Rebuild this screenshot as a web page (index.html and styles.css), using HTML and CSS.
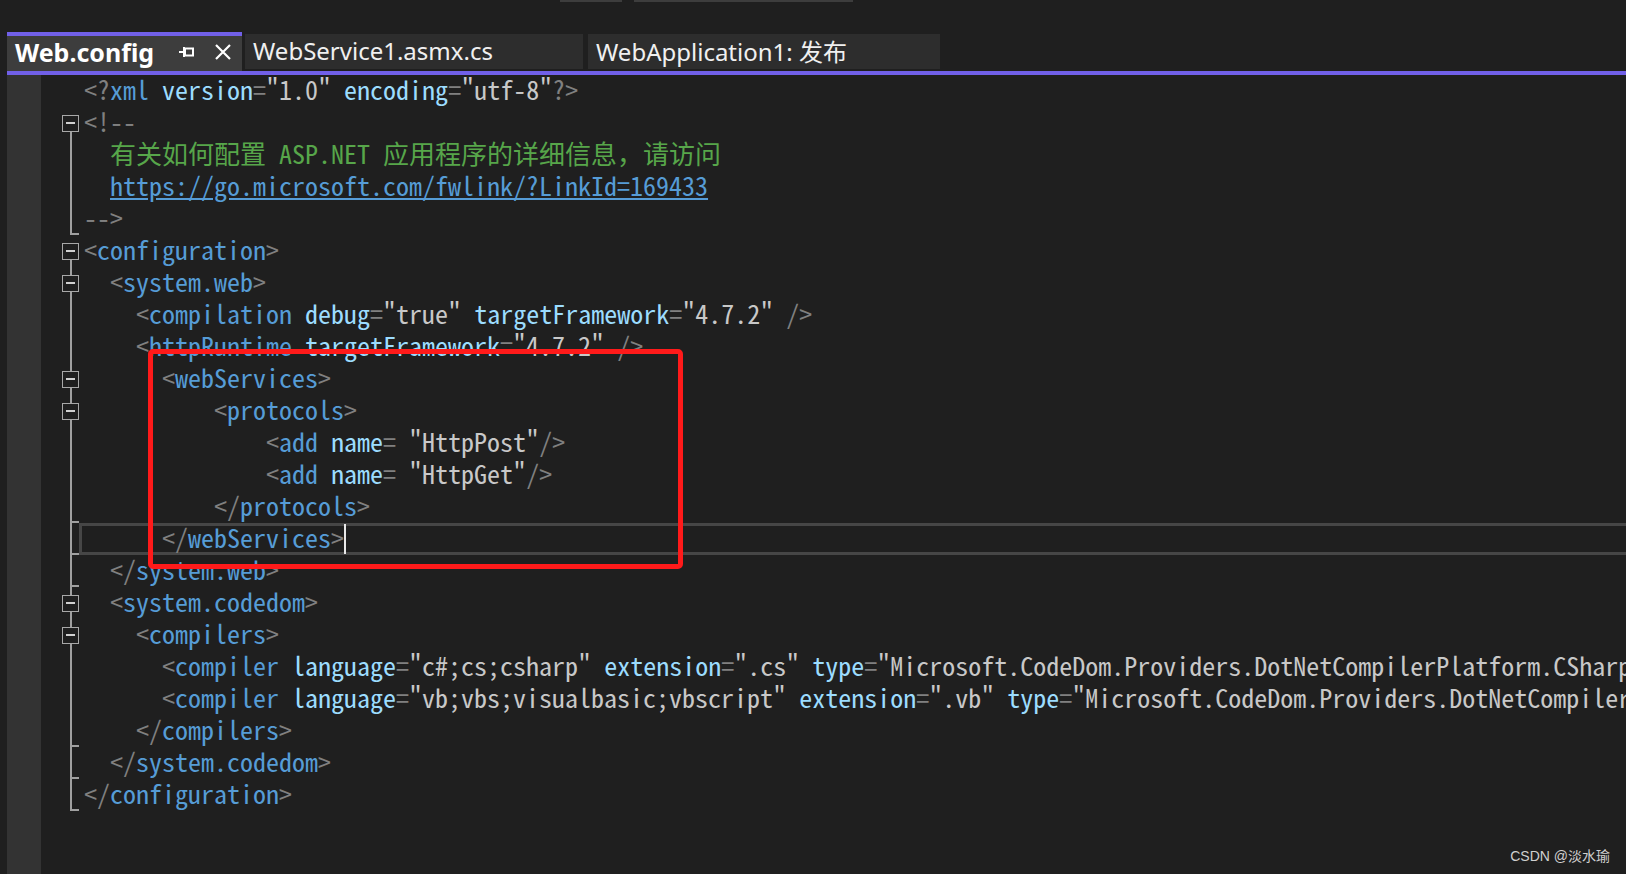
FILE: index.html
```html
<!DOCTYPE html>
<html lang="zh-CN">
<head>
    <meta charset="UTF-8">
    <title>Web.config</title>
    <link rel="stylesheet" href="styles.css">
</head>
<body>
    <!-- Toolbar remnants at the very top -->
    <div class="toolbar">
        <div class="tool-stub short"></div>
        <div class="tool-stub long"></div>
    </div>

    <!-- Document tabs -->
    <div class="tabs">
        <div class="tab active">
            <span class="tab-title">Web.config</span>
            <svg class="tab-pin" width="16" height="12" viewBox="0 0 16 12">
                <path d="M0 6H5M5 1V11" stroke="#fff" stroke-width="2" fill="none"/>
                <rect x="6" y="2.5" width="8" height="7" stroke="#fff" stroke-width="2" fill="#3d3d3d"/>
            </svg>
            <svg class="tab-close" width="18" height="18" viewBox="0 0 18 18">
                <path d="M2 2L16 16M16 2L2 16" stroke="#fff" stroke-width="2.2" fill="none"/>
            </svg>
        </div>
        <div class="tab">WebService1.asmx.cs</div>
        <div class="tab wide">WebApplication1: 发布</div>
    </div>
    <div class="tab-line"></div>

    <!-- Editor -->
    <div class="editor">
        <div class="margin-strip"></div>
        <div class="code">
            <div class="row"><div class="fold"></div><div class="line"><span class="b">&lt;?</span><span class="t">xml</span> <span class="a">version</span><span class="b">=</span><span class="v">"1.0"</span> <span class="a">encoding</span><span class="b">=</span><span class="v">"utf-8"</span><span class="b">?&gt;</span></div></div>
            <div class="row"><div class="fold g-top"><i class="box"></i></div><div class="line"><span class="b">&lt;!--</span></div></div>
            <div class="row"><div class="fold g-line"></div><div class="line"><span class="c">  <span class="cjk">有关如何配置</span> ASP.NET <span class="cjk">应用程序的详细信息，请访问</span></span></div></div>
            <div class="row"><div class="fold g-line"></div><div class="line">  <span class="u">https://go.microsoft.com/fwlink/?LinkId=169433</span></div></div>
            <div class="row"><div class="fold g-end"></div><div class="line"><span class="b">--&gt;</span></div></div>
            <div class="row"><div class="fold g-top"><i class="box"></i></div><div class="line"><span class="b">&lt;</span><span class="t">configuration</span><span class="b">&gt;</span></div></div>
            <div class="row"><div class="fold g-line"><i class="box"></i></div><div class="line">  <span class="b">&lt;</span><span class="t">system.web</span><span class="b">&gt;</span></div></div>
            <div class="row"><div class="fold g-line"></div><div class="line">    <span class="b">&lt;</span><span class="t">compilation</span> <span class="a">debug</span><span class="b">=</span><span class="v">"true"</span> <span class="a">targetFramework</span><span class="b">=</span><span class="v">"4.7.2"</span> <span class="b">/&gt;</span></div></div>
            <div class="row"><div class="fold g-line"></div><div class="line">    <span class="b">&lt;</span><span class="t">httpRuntime</span> <span class="a">targetFramework</span><span class="b">=</span><span class="v">"4.7.2"</span> <span class="b">/&gt;</span></div></div>
            <div class="row"><div class="fold g-line"><i class="box"></i></div><div class="line">      <span class="b">&lt;</span><span class="t">webServices</span><span class="b">&gt;</span></div></div>
            <div class="row"><div class="fold g-line"><i class="box"></i></div><div class="line">          <span class="b">&lt;</span><span class="t">protocols</span><span class="b">&gt;</span></div></div>
            <div class="row"><div class="fold g-line"></div><div class="line">              <span class="b">&lt;</span><span class="t">add</span> <span class="a">name</span><span class="b">=</span> <span class="v">"HttpPost"</span><span class="b">/&gt;</span></div></div>
            <div class="row"><div class="fold g-line"></div><div class="line">              <span class="b">&lt;</span><span class="t">add</span> <span class="a">name</span><span class="b">=</span> <span class="v">"HttpGet"</span><span class="b">/&gt;</span></div></div>
            <div class="row"><div class="fold g-end"></div><div class="line">          <span class="b">&lt;/</span><span class="t">protocols</span><span class="b">&gt;</span></div></div>
            <div class="row"><div class="fold g-end"></div><div class="line current">      <span class="b">&lt;/</span><span class="t">webServices</span><span class="b">&gt;</span><span class="caret"></span></div></div>
            <div class="row"><div class="fold g-end"></div><div class="line">  <span class="b">&lt;/</span><span class="t">system.web</span><span class="b">&gt;</span></div></div>
            <div class="row"><div class="fold g-line"><i class="box"></i></div><div class="line">  <span class="b">&lt;</span><span class="t">system.codedom</span><span class="b">&gt;</span></div></div>
            <div class="row"><div class="fold g-line"><i class="box"></i></div><div class="line">    <span class="b">&lt;</span><span class="t">compilers</span><span class="b">&gt;</span></div></div>
            <div class="row"><div class="fold g-line"></div><div class="line">      <span class="b">&lt;</span><span class="t">compiler</span> <span class="a">language</span><span class="b">=</span><span class="v">"c#;cs;csharp"</span> <span class="a">extension</span><span class="b">=</span><span class="v">".cs"</span> <span class="a">type</span><span class="b">=</span><span class="v">"Microsoft.CodeDom.Providers.DotNetCompilerPlatform.CSharpCodeProvider, Microsoft.CodeDom.Providers.DotNetCompilerPlatform"</span></div></div>
            <div class="row"><div class="fold g-line"></div><div class="line">      <span class="b">&lt;</span><span class="t">compiler</span> <span class="a">language</span><span class="b">=</span><span class="v">"vb;vbs;visualbasic;vbscript"</span> <span class="a">extension</span><span class="b">=</span><span class="v">".vb"</span> <span class="a">type</span><span class="b">=</span><span class="v">"Microsoft.CodeDom.Providers.DotNetCompilerPlatform.VBCodeProvider, Microsoft.CodeDom.Providers.DotNetCompilerPlatform"</span></div></div>
            <div class="row"><div class="fold g-end"></div><div class="line">    <span class="b">&lt;/</span><span class="t">compilers</span><span class="b">&gt;</span></div></div>
            <div class="row"><div class="fold g-end"></div><div class="line">  <span class="b">&lt;/</span><span class="t">system.codedom</span><span class="b">&gt;</span></div></div>
            <div class="row"><div class="fold g-end"></div><div class="line"><span class="b">&lt;/</span><span class="t">configuration</span><span class="b">&gt;</span></div></div>
        </div>
    </div>

    <!-- Red annotation box drawn over the editor -->
    <div class="mark"></div>

    <div class="watermark">CSDN @淡水瑜</div>
</body>
</html>
```

FILE: styles.css
```css
/* Page */
body {
    margin: 0;
    height: 874px;
    overflow: hidden;
    background-color: #1f1f1f;
    color: #c8c8c8;
    font-family: "Noto Sans", "Noto Sans CJK SC", sans-serif;
}

/* Toolbar remnants */
.toolbar {
    display: flex;
    gap: 12px;
    height: 32px;
    padding-left: 560px;
}

.tool-stub {
    height: 2px;
    background-color: #3d3d3d;
}

.tool-stub.short {
    width: 62px;
}

.tool-stub.long {
    width: 219px;
}

/* Tabs */
.tabs {
    display: flex;
    align-items: flex-start;
    gap: 3px;
    margin-left: 7px;
    height: 39px;
}

.tab {
    display: flex;
    align-items: center;
    box-sizing: border-box;
    width: 338px;
    height: 35px;
    margin-top: 2px;
    padding: 0 0 3px 8px;
    background-color: #2d2d2d;
    color: #f0f0f0;
    font-size: 24px;
    white-space: nowrap;
}

.tab.wide {
    width: 352px;
    margin-left: 2px;
}

.tab.active {
    width: 235px;
    height: 39px;
    margin-top: 0;
    border-top: 4px solid #7160e8;
    background-color: #3d3d3d;
    color: #fff;
    font-size: 25px;
    font-weight: bold;
}

.tab-title {
    width: 164px;
}

.tab-pin {
    margin-right: 19px;
}

.tab-line {
    height: 4px;
    margin-left: 7px;
    background-color: #7160e8;
}

/* Editor */
.editor {
    display: flex;
    padding-left: 7px;
}

.margin-strip {
    width: 34px;
    height: 800px;
    background-color: #333333;
}

.code {
    flex: 1;
    overflow: hidden;
    font-family: "Noto Sans Mono CJK SC", "Liberation Mono", monospace;
    font-size: 26px;
    line-height: 28px;
}

.row {
    display: flex;
    height: 32px;
}

.fold {
    display: flex;
    align-items: center;
    flex: none;
    width: 38px;
}

.g-line {
    background: linear-gradient(#a0a0a0, #a0a0a0) 29px 0 / 2px 100% no-repeat;
}

.g-top {
    background: linear-gradient(#a0a0a0, #a0a0a0) 29px 16px / 2px 16px no-repeat;
}

.g-end {
    background:
        linear-gradient(#a0a0a0, #a0a0a0) 29px 0 / 2px 100% no-repeat,
        linear-gradient(#a0a0a0, #a0a0a0) 29px 30px / 9px 2px no-repeat;
}

.box {
    box-sizing: border-box;
    width: 17px;
    height: 17px;
    margin-left: 21px;
    border: 1px solid #a8a8a8;
    background: linear-gradient(#d0d0d0, #d0d0d0) center / 9px 2px no-repeat, #1f1f1f;
}

.line {
    flex: 1;
    box-sizing: border-box;
    padding: 0 0 4px 5px;
    white-space: pre;
}

.line.current {
    margin-right: -10px;
    box-shadow: inset 3px 0 #464646, inset 0 3px #464646, inset 0 -3px #464646;
}

.caret {
    display: inline-block;
    width: 2px;
    height: 30px;
    margin-top: 1px;
    vertical-align: top;
    background-color: #e8e8e8;
}

/* Syntax colours */
.b { color: #808080; }
.t { color: #569cd6; }
.a { color: #9cdcfe; }
.v { color: #c8c8c8; }
.c { color: #57a64a; }
.u {
    color: #569cd6;
    text-decoration: underline;
}

/* Annotation and watermark */
.mark {
    position: absolute;
    left: 148px;
    top: 349px;
    width: 525px;
    height: 210px;
    border: 5px solid #ff1a1a;
    border-radius: 5px;
}

.watermark {
    position: absolute;
    right: 16px;
    bottom: 9px;
    font-family: "Liberation Sans", "Noto Sans CJK SC", sans-serif;
    font-size: 14px;
    color: #d0d0d0;
}
```
